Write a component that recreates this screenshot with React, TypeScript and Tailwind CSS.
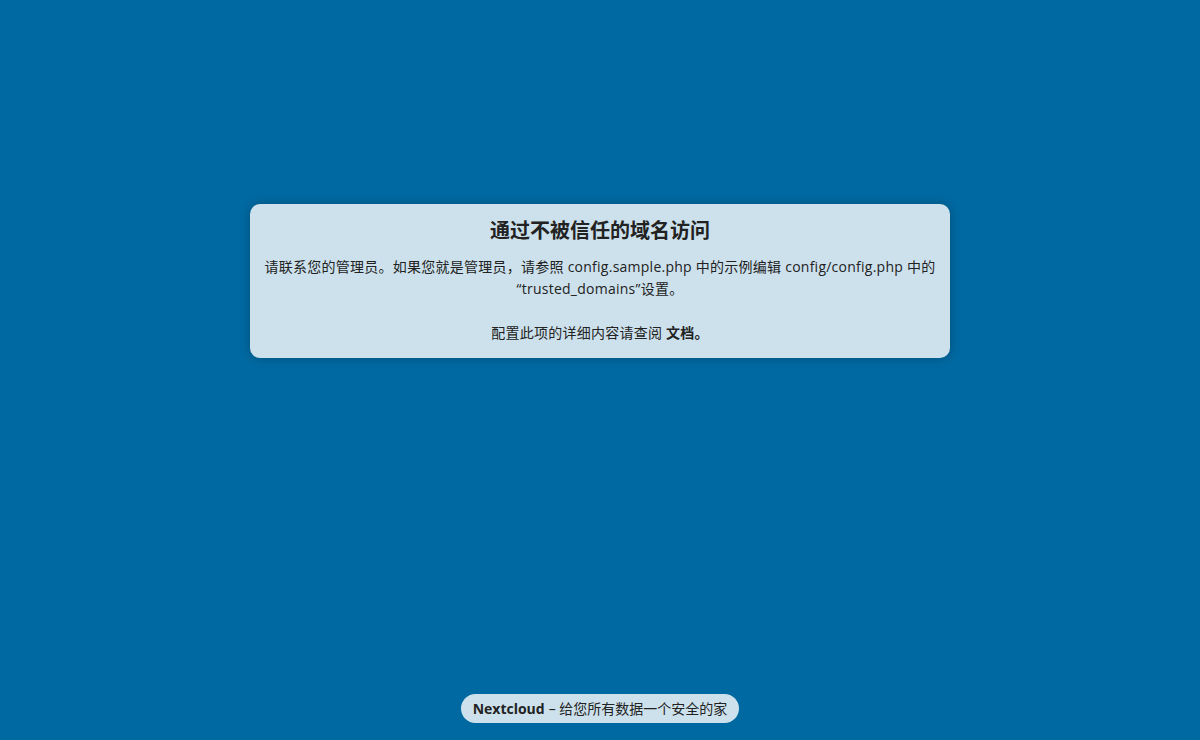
export default function App() {
  return (
    <div
      className="flex h-[740px] flex-col items-center bg-[#0069a1] text-[#222222]"
      style={{ fontFamily: '"Open Sans", "Noto Sans CJK SC", sans-serif' }}
    >
      <main className="flex flex-1 flex-col items-center pt-[204px]">
        <div className="w-[700px] rounded-[10px] bg-[#cce1ec] px-3 pb-[14px] pt-[12px] text-center shadow-[0_0_10px_rgba(0,0,0,0.25)]">
          <h2 className="mb-[10px] text-[20px] font-bold leading-[30px]">通过不被信任的域名访问</h2>
          <p className="text-[14px] leading-[22px] tracking-[0.25px]">
            请联系您的管理员。如果您就是管理员，请参照 config.sample.php 中的示例编辑 config/config.php 中的
            <br />
            “trusted_domains”设置。
            <br />
            <br />
            配置此项的详细内容请查阅 <span className="font-bold">文档。</span>
          </p>
        </div>
      </main>
      <footer className="mb-[17px] flex h-[29px] items-center rounded-full bg-[#cce1ec] px-3 text-[14px]">
        <span className="font-bold">Nextcloud</span>
        <span className="ml-1">– 给您所有数据一个安全的家</span>
      </footer>
    </div>
  );
}
